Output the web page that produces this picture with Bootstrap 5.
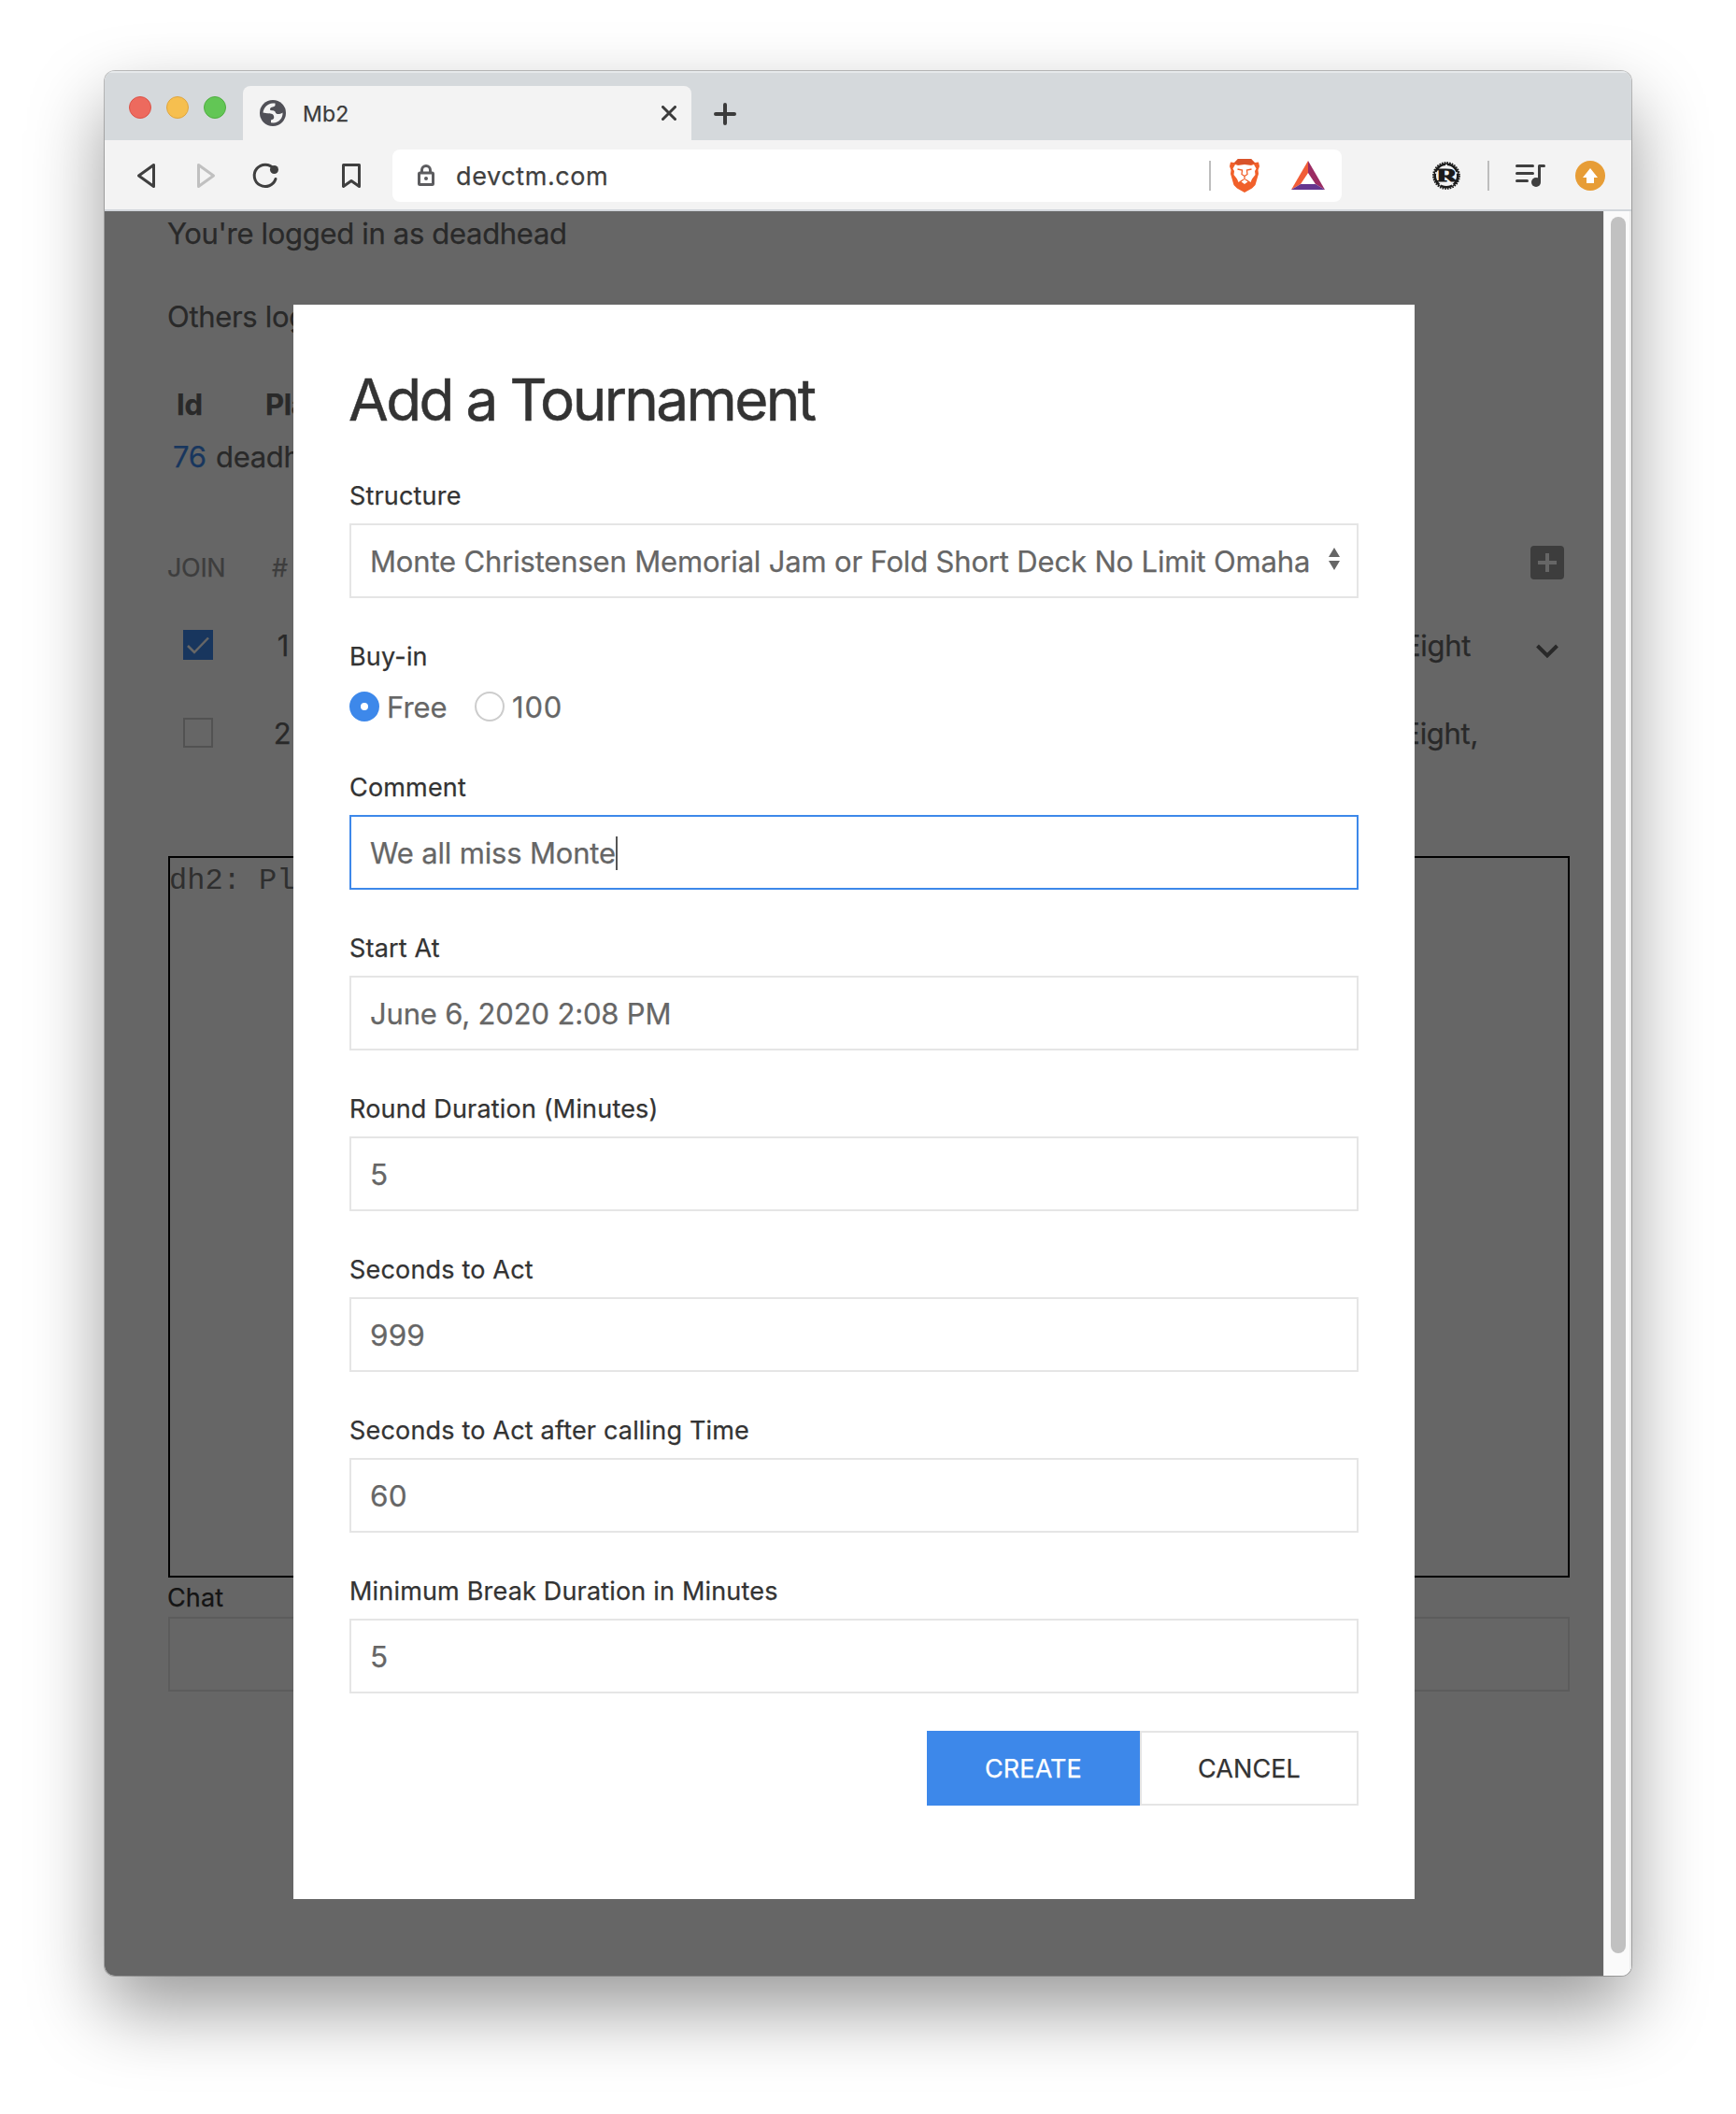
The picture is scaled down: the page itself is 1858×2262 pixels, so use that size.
<!DOCTYPE html>
<html lang="en">
<head>
<meta charset="utf-8">
<title>Mb2</title>
<link href="https://cdn.jsdelivr.net/npm/bootstrap@5.3.0/dist/css/bootstrap.min.css" rel="stylesheet">
<script src="https://cdn.jsdelivr.net/npm/bootstrap@5.3.0/dist/js/bootstrap.bundle.min.js"></script>
<style>
body{background:#fff;font-family:Inter,"Liberation Sans",sans-serif;font-size:31px;line-height:48px;letter-spacing:-.32px;color:#666;padding:76px 112px 0;height:2262px;overflow:hidden;-webkit-text-stroke:.25px}
svg{display:block;flex:none}
.win{width:1634px;height:2038px;border-radius:11px;box-shadow:0 0 0 1px rgba(0,0,0,.24),0 36px 80px rgba(0,0,0,.4)}
.strip{height:74px;background:#d5d9dc;box-shadow:inset 0 2px 0 #e6e9eb;padding-left:26px}
.light{width:24px;height:24px;border-radius:50%;border:1px solid;margin:27px 16px 0 0}
.tab-on{width:480px;height:58px;margin-left:2px;padding:0 16px 0 18px;background:#f3f3f3;border-radius:8px 8px 0 0;font-size:23px;line-height:58px;letter-spacing:.2px;color:#3b3b3b}
.tab-on span{padding:2px 0 0 2px}
.toolbar{height:76px;background:#f3f3f3;border-bottom:2px solid #d2d6db;padding:2px 28px 0 32px}
.url{width:1016px;height:56px;margin-left:32px;padding:0 18px 0 24px;background:#fff;border-radius:8px;font-size:27px;letter-spacing:.6px;color:#3f3f3f}
.url span{padding-top:1px}
.rule{width:2px;height:32px;background:#bdbdbd}
.viewport{height:1888px}
.page{width:1604px;padding:0 36px 0 68px;background:#fff}
.track{width:30px;background:#fafafa;border-right:2px solid #ececec;padding:6px 0 24px 7px;border-left:1px solid #e8e8e8}
.thumb{width:16px;height:1858px;border-radius:8px;background:#c1c1c1}
.link{color:#3d88ea}
.cap{height:42px;font-size:27px;line-height:36px;color:#999}
.cap div{padding-top:3px}
.nudge{margin-left:-1px}
.box{width:32px;height:32px;border:2px solid #ccc;margin-top:-2px}
.box.on{border:0;background:#3d88ea}
.log{height:772px;border:2px solid #000;margin:107px 0 0;padding-top:1px;font:32px/48px "Liberation Mono",monospace;letter-spacing:0;color:#777;overflow:hidden;-webkit-text-stroke:0;text-indent:-1px}
.chatlabel{font-size:27px;line-height:40px;padding-top:2px;letter-spacing:.1px;color:#333}
.chatbox{height:80px;border:2px solid #e5e5e5}
.shade{position:absolute;inset:0;background:rgba(0,0,0,.6);padding-top:100px}
.dialog{width:1200px;height:1706px;background:#fff;padding:60px}
.dialog h1{font-size:62px;line-height:83px;letter-spacing:-2.64px;color:#333;margin:0 0 40px -1px;font-weight:400;-webkit-text-stroke:.5px}
.dialog .form-label{display:block;font-size:27px;line-height:40px;padding-top:2px;letter-spacing:.18px;color:#333;margin:0 0 9px}
.field{margin-bottom:41px}
.dialog .form-control,.dialog .form-select{height:80px;border:2px solid #e5e5e5;border-radius:0;padding:0 20px;font-size:31px;line-height:76px;letter-spacing:-.17px;color:#666;background:#fff;box-shadow:none}
.dialog .form-select{padding-top:1px}
.dialog .digits{font-size:31.5px;letter-spacing:.1px}
.dialog .active-field{border-color:#3d88ea;padding-top:1px}
.caret{width:2px;height:36px;background:#555}
.spin{right:20px;top:26px}
.dot{width:32px;height:32px;border-radius:50%;border:2px solid #ccc;margin-top:7px}
.dot.on{border:12px solid #3d88ea;background:#fff}
.dialog .btn{height:80px;border-radius:0;font-size:27px;letter-spacing:.1px;padding:2px 0 0;border:0}
.dialog .btn-make{width:228px;background:#3d88ea;color:#fff}
.dialog .btn-drop{width:234px;background:#fff;color:#333;border:2px solid #e5e5e5}
</style>
</head>
<body>
<div class="win overflow-hidden">
  <div class="strip d-flex">
    <div class="light" style="background:#ed6a5e;border-color:#dc5348"></div>
    <div class="light" style="background:#f6bf4f;border-color:#dfa53e"></div>
    <div class="light" style="background:#62c655;border-color:#4fae40"></div>
    <div class="tab-on d-flex align-items-center align-self-end">
      <svg width="28" height="28"><circle cx="14" cy="14" r="14" fill="#505057"/><path fill="#f3f3f3" d="M3.500 13.500C4 8.500 8 4 14 3.500H16.500V6C15.500 8 12 6.800 11 9.500 10 12 15.500 10.500 16.500 12.500 17.500 16 21 15.500 24.500 13.500 25 19 20.500 24.500 14.500 24.500L12 24.300V21.500C15.500 20.500 15.500 19.500 15 17 14.500 14.500 11 14.500 8 14.300Z"/></svg>
      <span class="ms-3">Mb2</span>
      <svg class="ms-auto" width="16" height="16" stroke="#3b3b3b" stroke-width="3" stroke-linecap="round"><path d="M1.500 1.500 14.500 14.500M14.500 1.500 1.500 14.500"/></svg>
    </div>
    <svg class="align-self-center ms-4" width="24" height="24" style="margin-top:18px" stroke="#3b3b3b" stroke-width="4" stroke-linecap="round"><path d="M12 2V22M2 12H22"/></svg>
  </div>
  <div class="toolbar d-flex align-items-center">
    <svg width="24" height="32" fill="none" stroke="#3f3f3f" stroke-width="3" stroke-linejoin="round"><path d="M4.500 16 20.500 4.500V27.500Z"/></svg>
    <svg width="24" height="32" style="margin-left:40px" fill="none" stroke="#c0c0c0" stroke-width="3" stroke-linejoin="round"><path d="M4.500 4.500V27.500L20.500 16Z"/></svg>
    <svg width="32" height="32" style="margin-left:36px" fill="none" stroke="#3f3f3f" stroke-width="3" stroke-linecap="round"><path d="M25 8.500A11.700 11.700 0 1 0 27 19.500"/><circle cx="25.500" cy="9.500" r="4.500" fill="#3f3f3f" stroke="none"/></svg>
    <svg width="24" height="32" style="margin-left:64px" fill="none" stroke="#3f3f3f" stroke-width="3" stroke-linejoin="round"><path d="M3.500 4.500H20.500V27.500L12 21.500 3.500 27.500Z"/></svg>
    <div class="url d-flex align-items-center">
      <svg width="24" height="32" fill="none" stroke="#5c5c5f" stroke-width="3"><rect x="4.500" y="13" width="15" height="12.500" rx="1"/><path d="M7.500 13V10a4.500 4.500 0 0 1 9 0v3"/><circle cx="12" cy="19" r="2" fill="#5c5c5f" stroke="none"/></svg>
      <span style="margin-left:20px">devctm.com</span>
      <div class="rule ms-auto"></div>
      <svg width="32" height="36" viewBox="0 0 32 36" style="margin-left:20px"><path fill="#f1602a" d="M9 0H23L27 4 31 3.500 32 8 30.500 12 31 16 27.500 28 24 31.500 16 36 8 31.500 4.500 28 1 16 1.500 12 0 8 1 3.500 5 4Z"/><path fill="#d9532a" d="M9 0H23L27 4.500 22 6H10L5 4.500Z"/><path fill="#fff" d="M9 7 16 6 23 7 26 6 28.500 10.500 27 13 27.500 17 24 21.500 22.500 25 19 22.500 16 21 13 22.500 9.500 25 8 21.500 4.500 17 5 13 3.500 10.500 6 6Z"/><path fill="none" stroke="#f1602a" stroke-width="1.300" d="M8.500 11 13.500 12 13 16.500 16 18.500 19 16.500 18.500 12 23.500 11M16 18.500V21"/><path fill="#fff" d="M16 22 19.500 24.500 16 27 12.500 24.500Z"/></svg>
      <svg width="36" height="32" viewBox="0 0 36 32" style="margin-left:34px"><path fill="#f15d37" d="M18 0V13L10 25 0 31Z"/><path fill="#9b2c63" d="M18 0 36 31 26 25 18 13Z"/><path fill="#65358f" d="M0 31 10 25H26L36 31Z"/></svg>
    </div>
    <svg class="ms-auto" width="32" height="32" viewBox="0 0 32 32"><circle cx="16" cy="16" r="12.300" fill="none" stroke="#1b1b1b" stroke-width="2.600"/><circle cx="16" cy="16" r="14" fill="none" stroke="#1b1b1b" stroke-width="1.800" stroke-dasharray="1.600 1.150"/><g fill="#f3f3f3"><circle cx="16" cy="4.700" r="1"/><circle cx="5" cy="13" r="1"/><circle cx="27" cy="13" r="1"/><circle cx="9.500" cy="25.500" r="1"/><circle cx="22.500" cy="25.500" r="1"/></g><text x="5.500" y="21.500" font-family="Liberation Serif,serif" font-weight="700" font-size="18" letter-spacing="0" textLength="22" lengthAdjust="spacingAndGlyphs" fill="#1b1b1b" stroke="#1b1b1b" stroke-width="1">R</text></svg>
    <div class="rule" style="margin-left:28px"></div>
    <svg width="32" height="32" style="margin-left:28px" fill="none" stroke="#3f3f3f" stroke-width="3" stroke-linecap="round"><path d="M1.500 5.500H18.500M1.500 13.500H18.500M1.500 21.500H12.500M25.500 22V5.500H30.500" stroke-linejoin="round"/><circle cx="22" cy="23" r="5" fill="#3f3f3f" stroke="none"/></svg>
    <svg width="32" height="32" style="margin-left:32px"><circle cx="16" cy="16" r="16" fill="#e79d36"/><path fill="#fff" d="M16 8 24 18H20V24H12V18H8Z"/></svg>
  </div>
  <div class="viewport d-flex position-relative">
    <div class="page position-relative">
      <div class="nudge">You're logged in as deadhead</div>
      <div class="nudge" style="margin-top:41px">Others logged in</div>
      <div class="d-flex fw-bold" style="margin-top:46px;padding-left:9px"><div style="width:95px">Id</div><div>Player</div></div>
      <div class="d-flex mt-2" style="padding-left:5px"><div class="link" style="width:46px">76</div><div>deadhead</div></div>
      <div class="d-flex align-items-center cap" style="margin-top:72px"><div class="nudge" style="width:112px">JOIN</div><div>#</div>
        <svg class="ms-auto" width="36" height="36" style="margin:-8px 6px 0 0"><rect width="36" height="36" rx="4" fill="#999"/><path d="M18 8V28M8 18H28" stroke="#fff" stroke-width="4"/></svg>
      </div>
      <div class="d-flex align-items-center" style="margin-top:40px;padding-left:16px">
        <div class="box on"><svg width="32" height="32" fill="none" stroke="#fff" stroke-width="2.500"><path d="M5 17 12 24 27 8.500"/></svg></div>
        <div class="text-center" style="width:48px;margin-left:51px">1</div>
        <div class="ms-auto">Omaha Eight</div>
        <svg width="24" height="16" style="margin:12px 12px 0 70px" fill="none" stroke="#666" stroke-width="4"><path d="M1.500 2 12 12.500 22.500 2"/></svg>
      </div>
      <div class="d-flex align-items-center" style="margin-top:46px;padding-left:16px">
        <div class="box"></div>
        <div class="text-center" style="width:48px;margin-left:50px">2</div>
        <div class="ms-auto" style="margin-right:98px">Omaha Eight,</div>
      </div>
      <pre class="log">dh2: Play</pre>
      <div class="chatlabel nudge">Chat</div>
      <div class="chatbox"></div>
      <div class="shade d-flex justify-content-center align-items-start">
        <form class="dialog">
          <h1>Add a Tournament</h1>
          <div class="field"><label class="form-label">Structure</label>
            <div class="position-relative"><select class="form-select"><option>Monte Christensen Memorial Jam or Fold Short Deck No Limit Omaha</option></select>
            <svg class="spin position-absolute" width="12" height="24" fill="#666"><path d="M6 0 12 10H0ZM0 14H12L6 24Z"/></svg></div></div>
          <div style="margin-bottom:40px"><label class="form-label" style="margin-bottom:10px">Buy-in</label>
            <div class="d-flex"><div class="dot on"></div><span style="margin-left:8px;width:94px;letter-spacing:0">Free</span><div class="dot"></div><span class="ms-2" style="letter-spacing:.8px">100</span></div></div>
          <div class="field"><label class="form-label">Comment</label><div class="form-control active-field d-flex align-items-center"><span>We all miss Monte</span><div class="caret"></div></div></div>
          <div class="field"><label class="form-label">Start At</label><input class="form-control" value="June 6, 2020 2:08 PM"></div>
          <div class="field"><label class="form-label">Round Duration (Minutes)</label><input class="form-control digits" value="5"></div>
          <div class="field"><label class="form-label">Seconds to Act</label><input class="form-control digits" value="999"></div>
          <div class="field"><label class="form-label">Seconds to Act after calling Time</label><input class="form-control digits" value="60"></div>
          <div><label class="form-label">Minimum Break Duration in Minutes</label><input class="form-control digits" value="5"></div>
          <div class="d-flex justify-content-end" style="margin-top:40px"><button type="button" class="btn btn-make">CREATE</button><button type="button" class="btn btn-drop">CANCEL</button></div>
        </form>
      </div>
    </div>
    <div class="track"><div class="thumb"></div></div>
  </div>
</div>
</body>
</html>
